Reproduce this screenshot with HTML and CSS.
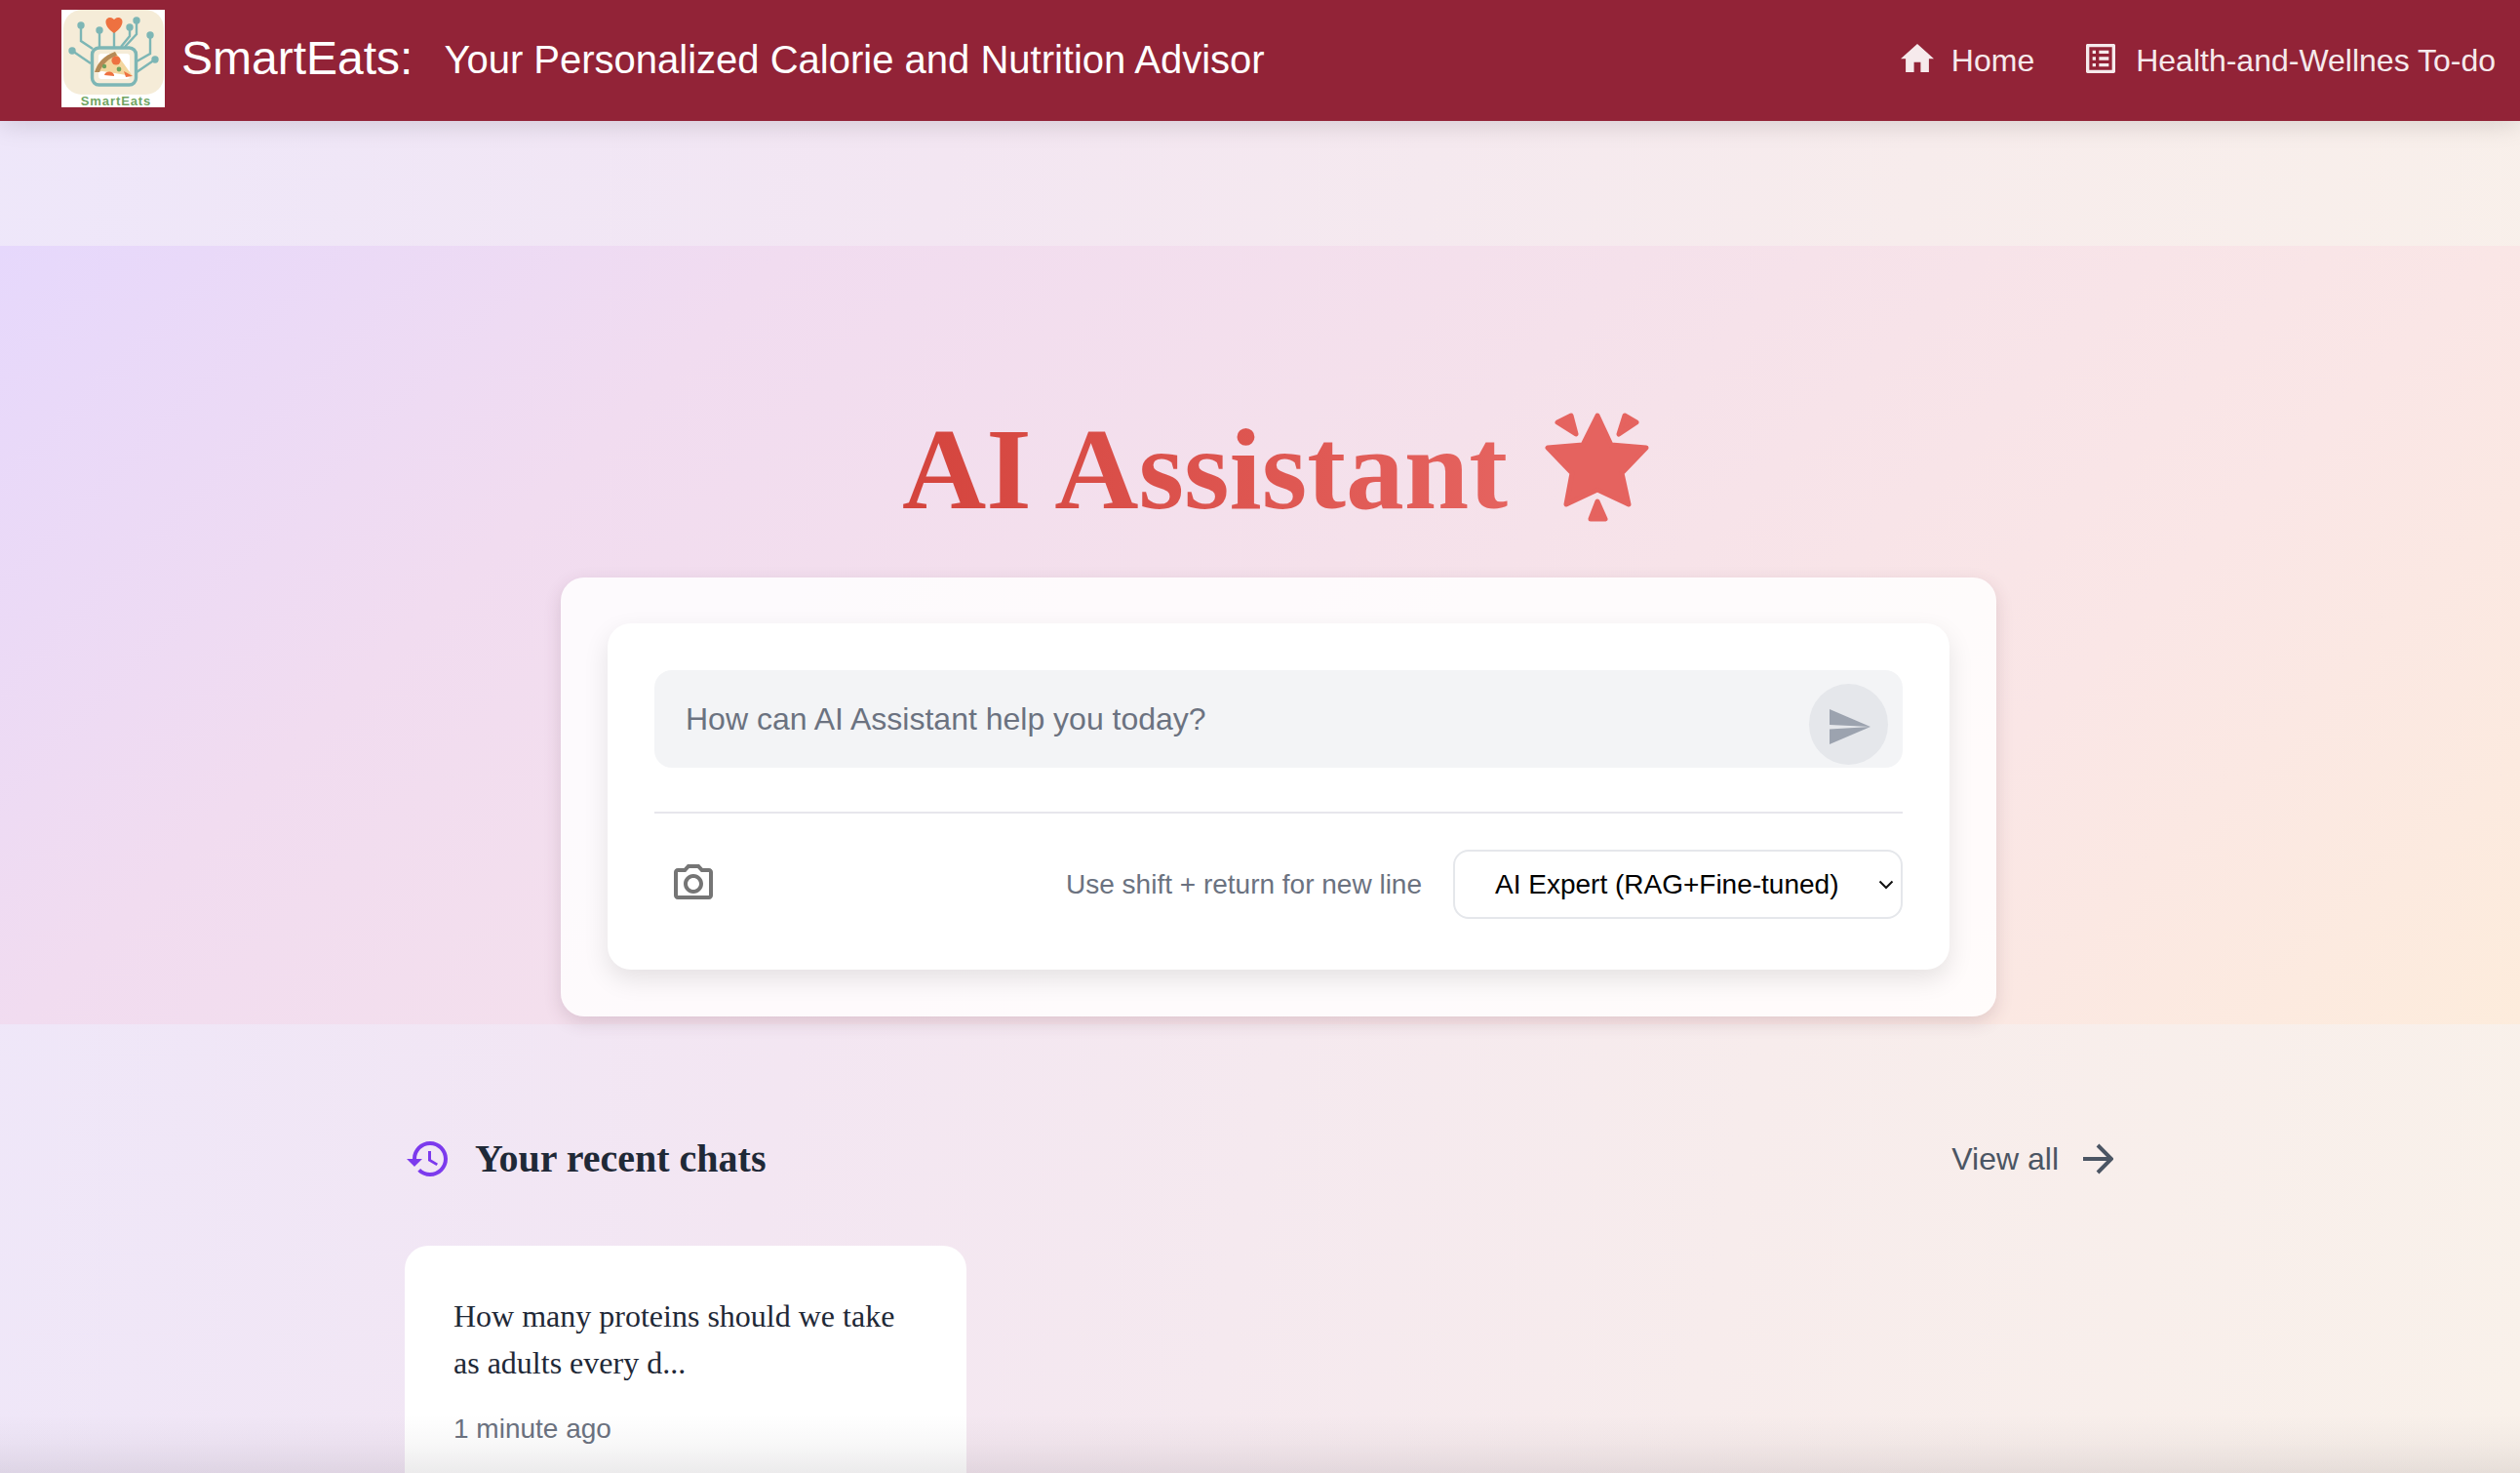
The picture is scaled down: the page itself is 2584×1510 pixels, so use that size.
FILE: index.html
```html
<!DOCTYPE html>
<html lang="en">
<head>
<meta charset="utf-8">
<title>SmartEats AI Assistant</title>
<link rel="stylesheet" href="styles.css">
</head>
<body>
<div class="page">
  <header class="topbar">
    <div class="brand">
      <svg class="logo" viewBox="0 0 106 100" aria-label="SmartEats logo">
        <rect width="106" height="100" fill="#fff"/>
        <rect x="2" y="0" width="103" height="87" rx="19" fill="#f5ecd8"/>
        <g fill="none" stroke="#7db6b5" stroke-width="2.4">
          <path d="M20 16V32L32 40"/>
          <path d="M39 21V38"/>
          <path d="M54 22V38"/>
          <path d="M70 18V27L61 38"/>
          <path d="M77 11V25L65 38"/>
          <path d="M91 26V45L77 53"/>
          <path d="M11 42L30 55"/>
          <path d="M96 51L77 64"/>
          <rect x="31.500" y="39" width="45" height="38" rx="7" stroke-width="3.400"/>
        </g>
        <g fill="#7db6b5">
          <circle cx="20" cy="16" r="3.700"/><circle cx="39" cy="21" r="3.700"/><circle cx="70" cy="18" r="3.700"/>
          <circle cx="77" cy="11" r="3.700"/><circle cx="91" cy="26" r="3.700"/><circle cx="11" cy="42" r="3.700"/><circle cx="96" cy="51" r="3.700"/>
        </g>
        <path d="M54 24C44 18 43 8 50 8C52 8 54 10 54 10C54 10 56 8 58 8C65 8 64 18 54 24Z" fill="#ee7140"/>
        <rect x="38" y="45" width="32" height="26" rx="3" fill="#fff"/>
        <path d="M34 64C37 54 44 47 55 43L73 68L42 63Z" fill="#f3d69f"/>
        <path d="M34 64C37 54 44 47 55 43L57 47C48 50 42 56 39 64Z" fill="#b58a57"/>
        <circle cx="56" cy="52" r="4.600" fill="#ee7140"/><circle cx="44" cy="58" r="2.200" fill="#6fa35e"/><circle cx="59" cy="61" r="2.400" fill="#6fa35e"/>
        <path d="M44 67a5 4 0 0 1 10 1Z" fill="#ee7140"/><path d="M64 63l9 5-7 1Z" fill="#ee7140"/>
        <text x="56" y="98" class="logo-text">SmartEats</text>
      </svg>
      <span class="brand-name">SmartEats:</span>
      <span class="brand-tag">Your Personalized Calorie and Nutrition Advisor</span>
    </div>
    <nav class="nav">
      <a class="nav-link">
        <svg class="home-icon" viewBox="2 3 20 17"><path d="M10 20v-6h4v6h5v-8h3L12 3 2 12h3v8z"/></svg>
        <span>Home</span>
      </a>
      <a class="nav-link">
        <svg class="list-icon" viewBox="3 3 18 18"><path d="M19 5v14H5V5h14m1.100-2H3.900c-.5 0-.9.4-.9.900v16.200c0 .4.4.9.9.9h16.200c.4 0 .9-.5.9-.9V3.900c0-.5-.5-.9-.9-.9zM11 7h6v2h-6V7zm0 4h6v2h-6v-2zm0 4h6v2h-6v-2zM7 7h2v2H7V7zm0 4h2v2H7v-2zm0 4h2v2H7v-2z"/></svg>
        <span>Health-and-Wellnes To-do</span>
      </a>
    </nav>
  </header>

  <div class="strip"></div>

  <section class="hero">
    <div class="title-row">
      <h1 class="title">AI Assistant</h1>
      <svg class="star" viewBox="0 0 107 112">
        <g fill="#e5635f" stroke="#e5635f" stroke-width="5" stroke-linejoin="round">
          <path d="M54 3L68 33L104 36L79 62L86 94L54 79L22 94L28 62L3 36L39 33Z"/>
          <path d="M27 3L32 22L13 10Z"/>
          <path d="M82 3L94 10L76 22Z"/>
          <path d="M54 91L62 109H47Z"/>
        </g>
      </svg>
    </div>
    <div class="outer-card">
      <div class="inner-card">
        <div class="prompt">
          <span class="placeholder">How can AI Assistant help you today?</span>
          <button class="send" type="button" aria-label="Send">
            <svg viewBox="0 0 42 36" class="send-icon"><path d="M0 0L42 18L0 16Z"/><path d="M0 20.500L42 18L0 36Z"/></svg>
          </button>
        </div>
        <div class="controls">
          <svg class="camera" viewBox="0 0 24 24"><path d="M20 4h-3.170L15 2H9L7.170 4H4c-1.100 0-2 .9-2 2v12c0 1.100.9 2 2 2h16c1.100 0 2-.9 2-2V6c0-1.100-.9-2-2-2zm0 14H4V6h4.050l1.830-2h4.240l1.830 2H20v12zM12 7c-2.760 0-5 2.240-5 5s2.240 5 5 5 5-2.240 5-5-2.240-5-5-5zm0 8c-1.650 0-3-1.350-3-3s1.350-3 3-3 3 1.350 3 3-1.350 3-3 3z"/></svg>
          <span class="hint">Use shift + return for new line</span>
          <div class="model">
            <span>AI Expert (RAG+Fine-tuned)</span>
            <svg class="chevron" viewBox="0 0 16 10"><path d="M1.500 1.500L8 8L14.500 1.500"/></svg>
          </div>
        </div>
      </div>
    </div>
  </section>

  <section class="recent">
    <div class="recent-head">
      <div class="recent-title">
        <svg class="history" viewBox="1 3 21 18"><path d="M13 3c-4.970 0-9 4.030-9 9H1l3.890 3.890.07.14L9 12H6c0-3.870 3.130-7 7-7s7 3.130 7 7-3.130 7-7 7c-1.930 0-3.680-.79-4.940-2.060l-1.420 1.420C8.270 19.990 10.510 21 13 21c4.970 0 9-4.030 9-9s-4.030-9-9-9zm-1 5v5l4.280 2.540.72-1.210-3.500-2.080V8H12z"/></svg>
        <h2>Your recent chats</h2>
      </div>
      <a class="view-all">
        <span>View all</span>
        <svg class="arrow" viewBox="0 0 32 32"><path d="M1 16H30M16 2L30 16L16 30"/></svg>
      </a>
    </div>
    <article class="chat-card">
      <p class="chat-text">How many proteins should we take as adults every d...</p>
      <p class="chat-time">1 minute ago</p>
    </article>
  </section>

  <div class="bottom-fade"></div>
</div>
</body>
</html>
```

FILE: styles.css
```css
* { box-sizing: border-box; }
html, body { margin: 0; padding: 0; height: 100%; overflow: hidden; }
body { font-family: "Liberation Sans", Arial, sans-serif; }

.page {
  position: relative;
  width: 2584px;
  height: 1510px;
  overflow: hidden;
  background: linear-gradient(100deg, #eee7fa 0%, #f3e6f2 35%, #f7ecec 70%, #f9f1ea 100%);
}

.topbar {
  position: relative;
  z-index: 2;
  height: 124px;
  padding: 10px 25px 14px 63px;
  display: flex;
  align-items: center;
  justify-content: space-between;
  background: #922337;
  box-shadow: 0 4px 24px rgba(0, 0, 0, 0.13);
  color: #fff;
}
.brand { display: flex; align-items: center; }
.logo { width: 106px; height: 100px; flex: none; overflow: visible; }
.logo-text { font: bold 13px "Liberation Sans", sans-serif; letter-spacing: 0.9px; fill: #6fa563; text-anchor: middle; }
.brand-name { margin-left: 17px; font-size: 48px; line-height: 1; }
.brand-tag { margin-left: 32px; font-size: 40px; line-height: 1; position: relative; top: 1px; }

.nav { display: flex; align-items: center; gap: 53px; }
.nav-link { display: flex; align-items: center; font-size: 32px; color: #f6eaec; position: relative; top: 2px; }
.home-icon { width: 34px; height: 29px; fill: #f6eaec; margin-right: 18px; position: relative; top: -3px; }
.list-icon { width: 30px; height: 30px; fill: #f6eaec; margin-right: 21px; position: relative; top: -2px; }

.strip { height: 128px; }

.hero {
  height: 798px;
  padding: 0 0 0 38px;
  display: flex;
  flex-direction: column;
  align-items: center;
  background: linear-gradient(135deg, #e6d8fc 0%, #f1dcf0 24%, #f5e1eb 50%, #fae6e6 76%, #fdecdc 100%);
}
.title-row { display: flex; align-items: center; height: 340px; padding-top: 120px; margin-right: 6px; }
.title {
  margin: 0;
  font-family: "Liberation Serif", "Times New Roman", serif;
  font-weight: 700;
  font-size: 119.500px;
  line-height: 1;
  background: linear-gradient(90deg, #d4443d, #e5635f);
  -webkit-background-clip: text;
  background-clip: text;
  color: transparent;
}
.star { width: 107px; height: 112px; margin-left: 38px; position: relative; top: -3px; }

.outer-card {
  width: 1472px;
  height: 450px;
  padding: 47px 48px;
  border-radius: 24px;
  background: rgba(255, 255, 255, 0.84);
  box-shadow: 0 6px 18px rgba(90, 50, 70, 0.16);
}
.inner-card {
  height: 355px;
  padding: 48px 48px 0;
  border-radius: 24px;
  background: #fff;
  box-shadow: 0 10px 26px rgba(0, 0, 0, 0.1);
}
.prompt {
  height: 100px;
  padding: 14px 15px 3px 32px;
  display: flex;
  align-items: center;
  justify-content: space-between;
  border-radius: 18px;
  background: #f3f4f6;
}
.placeholder { font-size: 32px; color: #6b7280; position: relative; top: -5px; }
.send {
  width: 81px;
  height: 83px;
  padding: 4px 0 0 2px;
  border: 0;
  border-radius: 50%;
  background: #e5e7eb;
  display: flex;
  align-items: center;
  justify-content: center;
}
.send-icon { width: 42px; height: 36px; fill: #9ca3af; }

.controls {
  margin-top: 45px;
  padding-top: 37px;
  border-top: 2px solid #e7e6ec;
  display: flex;
  align-items: center;
}
.camera { width: 48px; height: 48px; fill: #757575; margin-left: 16px; flex: none; position: relative; top: -1px; }
.hint { margin-left: auto; font-size: 28px; color: #6b7280; }
.model {
  width: 461px;
  height: 71px;
  margin-left: 32px;
  padding: 0 7px 0 41px;
  display: flex;
  align-items: center;
  justify-content: space-between;
  border: 2px solid #e5e7eb;
  border-radius: 16px;
  background: #fff;
  font-size: 28px;
  color: #000;
}
.chevron { width: 16px; height: 10px; fill: none; stroke: #111; stroke-width: 2; }

.recent { width: 1754px; margin: 0 auto; padding-top: 116px; }
.recent-head { display: flex; align-items: center; justify-content: space-between; height: 44px; padding: 0 2px; }
.recent-title { display: flex; align-items: center; }
.history { width: 42px; height: 36px; fill: #7c3aed; }
.recent-title h2 {
  margin: 0 0 0 28px;
  font-family: "Liberation Serif", "Times New Roman", serif;
  font-size: 40px;
  font-weight: 700;
  line-height: 1;
  color: #1f2937;
}
.view-all { display: flex; align-items: center; font-size: 32px; color: #4b5563; }
.arrow { width: 32px; height: 32px; margin-left: 24px; fill: none; stroke: #4b5563; stroke-width: 4; }

.chat-card {
  width: 576px;
  height: 320px;
  margin-top: 67px;
  padding: 46px 48px;
  border: 2px solid rgba(255, 255, 255, 0.5);
  border-radius: 24px;
  background: #fff;
}
.chat-text {
  margin: 0;
  font-family: "Liberation Serif", "Times New Roman", serif;
  font-size: 32px;
  line-height: 48px;
  color: #1f2937;
}
.chat-time { margin: 24px 0 0; font-size: 28px; line-height: 40px; color: #6b7280; }

.bottom-fade {
  position: absolute;
  left: 0;
  right: 0;
  bottom: 0;
  height: 60px;
  background: linear-gradient(to bottom, rgba(40, 30, 40, 0), rgba(40, 30, 40, 0.03) 50%, rgba(40, 30, 40, 0.09));
  pointer-events: none;
}
```
